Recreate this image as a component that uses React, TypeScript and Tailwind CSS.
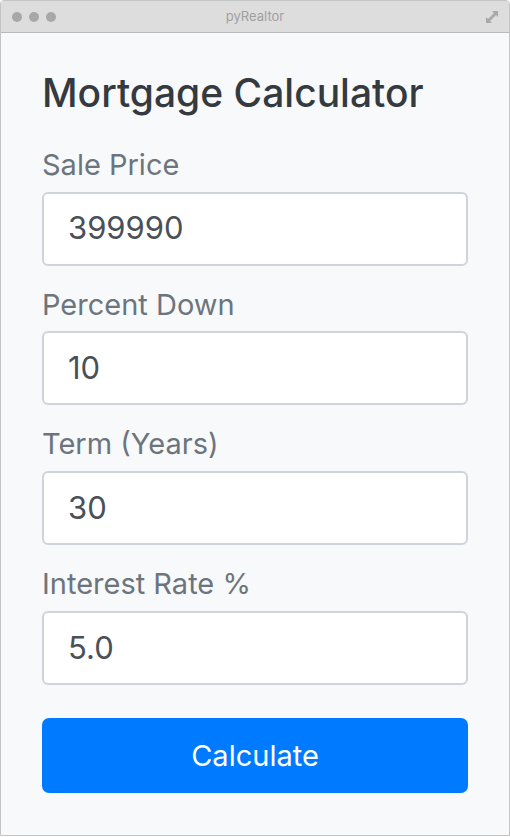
import React from "react";

const fields = [
  { label: "Sale Price", value: "399990" },
  { label: "Percent Down", value: "10" },
  { label: "Term (Years)", value: "30" },
  { label: "Interest Rate %", value: "5.0" },
];

function TitleBar() {
  return (
    <div className="relative flex h-[32px] items-center border-b border-[#b9b9b9] bg-[#dddddd] pl-[11px] pr-[10px]">
      <div className="flex gap-[7px]">
        <span className="h-[10px] w-[10px] rounded-full bg-[#a8a8a8]" />
        <span className="h-[10px] w-[10px] rounded-full bg-[#a8a8a8]" />
        <span className="h-[10px] w-[10px] rounded-full bg-[#a8a8a8]" />
      </div>
      <div className="absolute inset-x-0 top-0 flex h-full items-center justify-center text-[13px] text-[#a0a0a0]">
        pyRealtor
      </div>
      <svg width="14" height="14" viewBox="0 0 14 14" className="ml-auto">
        <path d="M7 1h6v6l-2-2-3 3-2-2 3-3z" fill="#a8a8a8" />
        <path d="M7 13H1V7l2 2 3-3 2 2-3 3z" fill="#a8a8a8" />
      </svg>
    </div>
  );
}

export default function App() {
  return (
    <div
      className="h-[837px] w-[510px] overflow-hidden"
      style={{ fontFamily: "Inter, 'Noto Sans', sans-serif" }}
    >
      <div className="flex h-[836px] flex-col rounded-t-[4px] border border-[#c4c4c4] bg-[#f8f9fa]">
        <TitleBar />
        <div className="flex flex-col px-[41px] pt-[37px]">
          <h1 className="mb-[31px] text-[39px] font-medium leading-[1.2] text-[#343a40]">
            Mortgage Calculator
          </h1>
          {fields.map((f) => (
            <div key={f.label} className="mb-[22px] flex flex-col">
              <label className="mb-[9px] text-[29px] leading-[1.2] text-[#6c757d]">{f.label}</label>
              <div className="flex h-[74px] items-center rounded-[6px] border-2 border-[#ced4da] bg-white px-[24px] text-[31px] text-[#495057]">
                {f.value}
              </div>
            </div>
          ))}
          <button className="mt-[11px] flex h-[75px] items-center justify-center rounded-[7px] bg-[#007bff] text-[29px] text-white">
            Calculate
          </button>
        </div>
      </div>
    </div>
  );
}
